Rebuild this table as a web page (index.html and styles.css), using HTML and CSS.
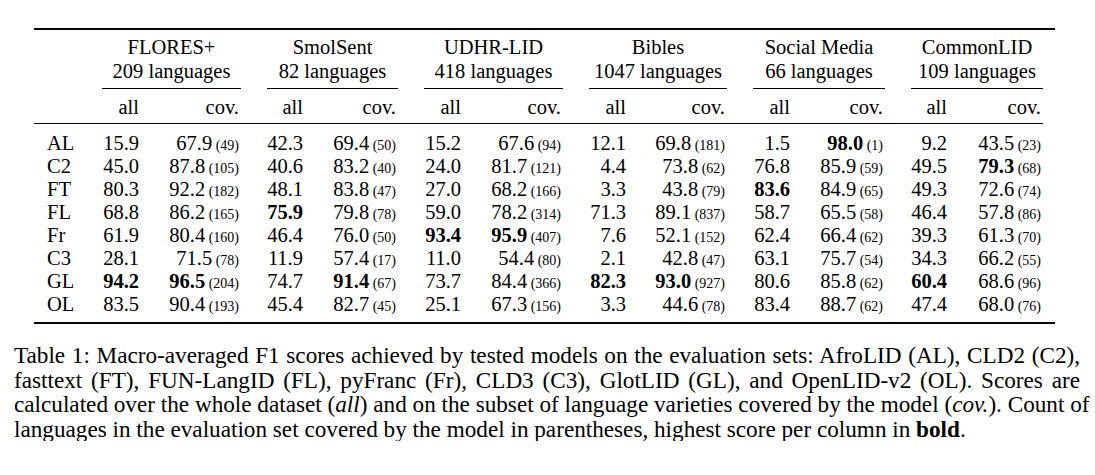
FILE: index.html
```html
<!DOCTYPE html>
<html lang="en">
<head>
<meta charset="utf-8">
<title>Table 1</title>
<link rel="stylesheet" href="styles.css">
</head>
<body>
<div class="page">
  <div class="table">
    <div class="head grid">
      <div class="cell label"></div>
      <div class="group"><div class="gtitle">FLORES+<br>209 languages</div></div>
      <div class="group"><div class="gtitle">SmolSent<br>82 languages</div></div>
      <div class="group"><div class="gtitle">UDHR-LID<br>418 languages</div></div>
      <div class="group"><div class="gtitle">Bibles<br>1047 languages</div></div>
      <div class="group"><div class="gtitle">Social Media<br>66 languages</div></div>
      <div class="group"><div class="gtitle">CommonLID<br>109 languages</div></div>
    </div>
    <div class="sub grid">
      <div class="cell label"></div>
      <div class="cell all">all</div><div class="cell cov">cov.</div>
      <div class="cell all">all</div><div class="cell cov">cov.</div>
      <div class="cell all">all</div><div class="cell cov">cov.</div>
      <div class="cell all">all</div><div class="cell cov">cov.</div>
      <div class="cell all">all</div><div class="cell cov">cov.</div>
      <div class="cell all">all</div><div class="cell cov">cov.</div>
    </div>
    <div class="body grid">
      <div class="cell label">AL</div>
      <div class="cell all">15.9</div><div class="cell cov">67.9<small> (49)</small></div>
      <div class="cell all">42.3</div><div class="cell cov">69.4<small> (50)</small></div>
      <div class="cell all">15.2</div><div class="cell cov">67.6<small> (94)</small></div>
      <div class="cell all">12.1</div><div class="cell cov">69.8<small> (181)</small></div>
      <div class="cell all">1.5</div><div class="cell cov"><b>98.0</b><small> (1)</small></div>
      <div class="cell all">9.2</div><div class="cell cov">43.5<small> (23)</small></div>

      <div class="cell label">C2</div>
      <div class="cell all">45.0</div><div class="cell cov">87.8<small> (105)</small></div>
      <div class="cell all">40.6</div><div class="cell cov">83.2<small> (40)</small></div>
      <div class="cell all">24.0</div><div class="cell cov">81.7<small> (121)</small></div>
      <div class="cell all">4.4</div><div class="cell cov">73.8<small> (62)</small></div>
      <div class="cell all">76.8</div><div class="cell cov">85.9<small> (59)</small></div>
      <div class="cell all">49.5</div><div class="cell cov"><b>79.3</b><small> (68)</small></div>

      <div class="cell label">FT</div>
      <div class="cell all">80.3</div><div class="cell cov">92.2<small> (182)</small></div>
      <div class="cell all">48.1</div><div class="cell cov">83.8<small> (47)</small></div>
      <div class="cell all">27.0</div><div class="cell cov">68.2<small> (166)</small></div>
      <div class="cell all">3.3</div><div class="cell cov">43.8<small> (79)</small></div>
      <div class="cell all"><b>83.6</b></div><div class="cell cov">84.9<small> (65)</small></div>
      <div class="cell all">49.3</div><div class="cell cov">72.6<small> (74)</small></div>

      <div class="cell label">FL</div>
      <div class="cell all">68.8</div><div class="cell cov">86.2<small> (165)</small></div>
      <div class="cell all"><b>75.9</b></div><div class="cell cov">79.8<small> (78)</small></div>
      <div class="cell all">59.0</div><div class="cell cov">78.2<small> (314)</small></div>
      <div class="cell all">71.3</div><div class="cell cov">89.1<small> (837)</small></div>
      <div class="cell all">58.7</div><div class="cell cov">65.5<small> (58)</small></div>
      <div class="cell all">46.4</div><div class="cell cov">57.8<small> (86)</small></div>

      <div class="cell label">Fr</div>
      <div class="cell all">61.9</div><div class="cell cov">80.4<small> (160)</small></div>
      <div class="cell all">46.4</div><div class="cell cov">76.0<small> (50)</small></div>
      <div class="cell all"><b>93.4</b></div><div class="cell cov"><b>95.9</b><small> (407)</small></div>
      <div class="cell all">7.6</div><div class="cell cov">52.1<small> (152)</small></div>
      <div class="cell all">62.4</div><div class="cell cov">66.4<small> (62)</small></div>
      <div class="cell all">39.3</div><div class="cell cov">61.3<small> (70)</small></div>

      <div class="cell label">C3</div>
      <div class="cell all">28.1</div><div class="cell cov">71.5<small> (78)</small></div>
      <div class="cell all">11.9</div><div class="cell cov">57.4<small> (17)</small></div>
      <div class="cell all">11.0</div><div class="cell cov">54.4<small> (80)</small></div>
      <div class="cell all">2.1</div><div class="cell cov">42.8<small> (47)</small></div>
      <div class="cell all">63.1</div><div class="cell cov">75.7<small> (54)</small></div>
      <div class="cell all">34.3</div><div class="cell cov">66.2<small> (55)</small></div>

      <div class="cell label">GL</div>
      <div class="cell all"><b>94.2</b></div><div class="cell cov"><b>96.5</b><small> (204)</small></div>
      <div class="cell all">74.7</div><div class="cell cov"><b>91.4</b><small> (67)</small></div>
      <div class="cell all">73.7</div><div class="cell cov">84.4<small> (366)</small></div>
      <div class="cell all"><b>82.3</b></div><div class="cell cov"><b>93.0</b><small> (927)</small></div>
      <div class="cell all">80.6</div><div class="cell cov">85.8<small> (62)</small></div>
      <div class="cell all"><b>60.4</b></div><div class="cell cov">68.6<small> (96)</small></div>

      <div class="cell label">OL</div>
      <div class="cell all">83.5</div><div class="cell cov">90.4<small> (193)</small></div>
      <div class="cell all">45.4</div><div class="cell cov">82.7<small> (45)</small></div>
      <div class="cell all">25.1</div><div class="cell cov">67.3<small> (156)</small></div>
      <div class="cell all">3.3</div><div class="cell cov">44.6<small> (78)</small></div>
      <div class="cell all">83.4</div><div class="cell cov">88.7<small> (62)</small></div>
      <div class="cell all">47.4</div><div class="cell cov">68.0<small> (76)</small></div>
    </div>
  </div>

  <div class="caption">
    <div class="line">Table 1: Macro-averaged F1 scores achieved by tested models on the evaluation sets: AfroLID (AL), CLD2 (C2),</div>
    <div class="line">fasttext (FT), FUN-LangID (FL), pyFranc (Fr), CLD3 (C3), GlotLID (GL), and OpenLID-v2 (OL). Scores are</div>
    <div class="line">calculated over the whole dataset (<i>all</i>) and on the subset of language varieties covered by the model (<i>cov.</i>). Count of</div>
    <div class="line last">languages in the evaluation set covered by the model in parentheses, highest score per column in <b>bold</b>.</div>
  </div>
</div>
</body>
</html>
```

FILE: styles.css
```css
html, body {
  margin: 0;
  padding: 0;
  background: #fff;
}

body {
  font-family: "Liberation Serif", "Times New Roman", serif;
  font-size: 20.5px;
  color: #000;
}

.page {
  padding-top: 28px;
}

.table {
  margin-left: 34px;
  width: 1021px;
  box-sizing: border-box;
  padding-right: 12px;
  border-top: 2px solid #000;
  border-bottom: 2px solid #000;
}

.grid {
  display: grid;
  grid-template-columns: 42px 63px 102px 62px 95px 63px 102px 63px 101px 63px 95px 62px 96px;
}

.head {
  padding-top: 5px;
}

.group {
  grid-column: span 2;
  padding-left: 26px;
}

.gtitle {
  text-align: center;
  line-height: 24px;
  padding-bottom: 5px;
  border-bottom: 1px solid #000;
}

.sub {
  padding-top: 7px;
  padding-bottom: 4px;
  border-bottom: 1px solid #000;
  line-height: 23px;
}

.body {
  padding-top: 8px;
  padding-bottom: 6px;
  line-height: 23px;
}

.cell {
  white-space: nowrap;
}

.label {
  padding-left: 13px;
  text-align: left;
}

.all {
  text-align: right;
}

.cov {
  text-align: right;
  padding-right: 2px;
}

small {
  font-size: 14px;
  line-height: 0;
}

b {
  font-weight: bold;
}

.caption {
  margin-top: 19px;
  margin-left: 14px;
  width: 1066px;
  font-size: 23.2px;
  line-height: 24.5px;
}

.line {
  text-align: justify;
  text-align-last: justify;
  white-space: nowrap;
}

.line.last {
  text-align: left;
  text-align-last: left;
}
```
